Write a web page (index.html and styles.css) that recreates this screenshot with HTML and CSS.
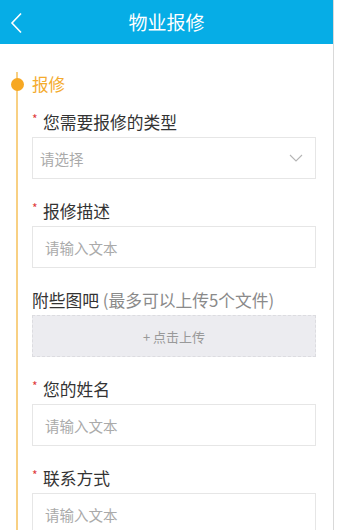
FILE: index.html
```html
<!DOCTYPE html>
<html lang="zh-CN">
<head>
    <meta charset="UTF-8">
    <meta name="viewport" content="width=device-width, initial-scale=1.0">
    <title>物业报修</title>
    <link rel="stylesheet" href="styles.css">
</head>
<body>
    <div class="page">
        <header class="topbar">
            <a class="back" href="#">
                <svg width="14" height="22" viewBox="0 0 14 22"><polyline points="11,1.5 2,11 11,20.5" fill="none" stroke="#fff" stroke-width="1.6"/></svg>
            </a>
            <h1>物业报修</h1>
            <span></span>
        </header>

        <div class="timeline">
            <div class="section-head">报修</div>

            <div class="field">
                <label><i>*</i>您需要报修的类型</label>
                <div class="select">
                    <span class="placeholder">请选择</span>
                    <svg width="14" height="8" viewBox="0 0 14 8"><polyline points="1,1 7,7 13,1" fill="none" stroke="#b5b5b5" stroke-width="1.1"/></svg>
                </div>
            </div>

            <div class="field">
                <label><i>*</i>报修描述</label>
                <div class="input"><span class="placeholder">请输入文本</span></div>
            </div>

            <div class="field">
                <label>附些图吧 <span class="hint">(最多可以上传5个文件)</span></label>
                <div class="upload">+ 点击上传</div>
            </div>

            <div class="field">
                <label><i>*</i>您的姓名</label>
                <div class="input"><span class="placeholder">请输入文本</span></div>
            </div>

            <div class="field">
                <label><i>*</i>联系方式</label>
                <div class="input"><span class="placeholder">请输入文本</span></div>
            </div>
        </div>
    </div>
</body>
</html>
```

FILE: styles.css
```css
body {
    margin: 0;
    background: #fff;
    font-family: "Noto Sans CJK SC", "Noto Sans", sans-serif;
    color: #333;
    overflow: hidden;
}
.page {
    width: 333px;
    min-height: 600px;
    border-right: 1px solid #d9d9d9;
}
.topbar {
    height: 44px;
    background: #06ade6;
    display: grid;
    grid-template-columns: 44px 1fr 44px;
    align-items: center;
}
.back {
    display: flex;
    padding-left: 10px;
    padding-top: 1px;
}
.topbar h1 {
    margin: 0;
    text-align: center;
    color: #fff;
    font-size: 19px;
    font-weight: normal;
    line-height: 44px;
}
.timeline {
    margin: 40px 0 0 16px;
    border-left: 2px solid #f8d083;
    padding: 0 17px 0 14px;
}
.section-head {
    position: relative;
    margin-top: -12px;
    height: 24px;
    line-height: 24px;
    font-size: 16.5px;
    color: #f4ab2e;
}
.section-head::before {
    content: "";
    position: absolute;
    left: -21.5px;
    top: 5.5px;
    width: 13px;
    height: 13px;
    border-radius: 50%;
    background: #f7a823;
}
.field {
    margin-top: 15px;
}
.field + .field {
    margin-top: 21px;
}
.field label {
    display: block;
    height: 22px;
    line-height: 22px;
    font-size: 16.75px;
    margin-bottom: 4px;
    white-space: nowrap;
}
.field label i {
    display: inline-block;
    width: 11px;
    font-style: normal;
    font-size: 12px;
    color: #e03c3c;
    vertical-align: top;
    line-height: 14px;
    padding-top: 1px;
}
.hint {
    color: #8a8a8a;
}
.select,
.input {
    box-sizing: border-box;
    height: 42px;
    border: 1px solid #e6e6e6;
    display: flex;
    align-items: center;
    justify-content: space-between;
    padding: 0 12px;
}
.select {
    padding-left: 7px;
}
.placeholder {
    font-size: 14.5px;
    color: #aaa;
}
.upload {
    box-sizing: border-box;
    height: 42px;
    background: #ececf0;
    border: 1px dashed #dcdce0;
    display: flex;
    align-items: center;
    justify-content: center;
    font-size: 13px;
    color: #999;
}
```
